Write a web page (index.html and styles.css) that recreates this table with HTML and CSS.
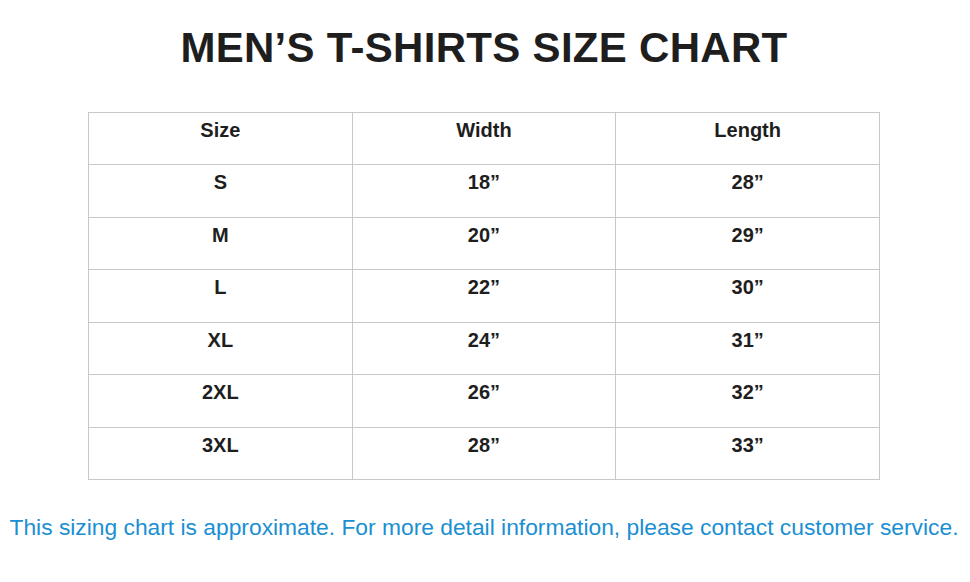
FILE: index.html
```html
<!DOCTYPE html>
<html>
<head>
<meta charset="utf-8">
<link rel="stylesheet" href="styles.css">
</head>
<body>
<div class="page">
  <h1 class="title">MEN’S T-SHIRTS SIZE CHART</h1>
  <table class="chart">
    <tr><th>Size</th><th>Width</th><th>Length</th></tr>
    <tr><td>S</td><td>18”</td><td>28”</td></tr>
    <tr><td>M</td><td>20”</td><td>29”</td></tr>
    <tr><td>L</td><td>22”</td><td>30”</td></tr>
    <tr><td>XL</td><td>24”</td><td>31”</td></tr>
    <tr><td>2XL</td><td>26”</td><td>32”</td></tr>
    <tr><td>3XL</td><td>28”</td><td>33”</td></tr>
  </table>
  <p class="note">This sizing chart is approximate. For more detail information, please contact customer service.</p>
</div>
</body>
</html>
```
FILE: styles.css
```css
html, body {
  margin: 0;
  padding: 0;
  background: #ffffff;
}
.page {
  width: 968px;
  height: 582px;
  display: flex;
  flex-direction: column;
  align-items: center;
  font-family: "Liberation Sans", Arial, sans-serif;
}
.title {
  margin: 24px 0 0 0;
  font-size: 42px;
  line-height: 48px;
  font-weight: bold;
  color: #1e1e1e;
  letter-spacing: 0.3px;
}
.chart {
  margin-top: 40px;
  width: 792px;
  border-collapse: collapse;
  table-layout: fixed;
}
.chart th, .chart td {
  border: 1px solid #c8c8c8;
  height: 52.43px;
  box-sizing: border-box;
  padding: 5px 0 0 0;
  vertical-align: top;
  text-align: center;
  font-size: 20px;
  line-height: 24px;
  font-weight: bold;
  color: #1e1e1e;
}
.note {
  margin: 33px 0 0 0;
  font-size: 22.8px;
  line-height: 28px;
  color: #1b8fd2;
}
```
